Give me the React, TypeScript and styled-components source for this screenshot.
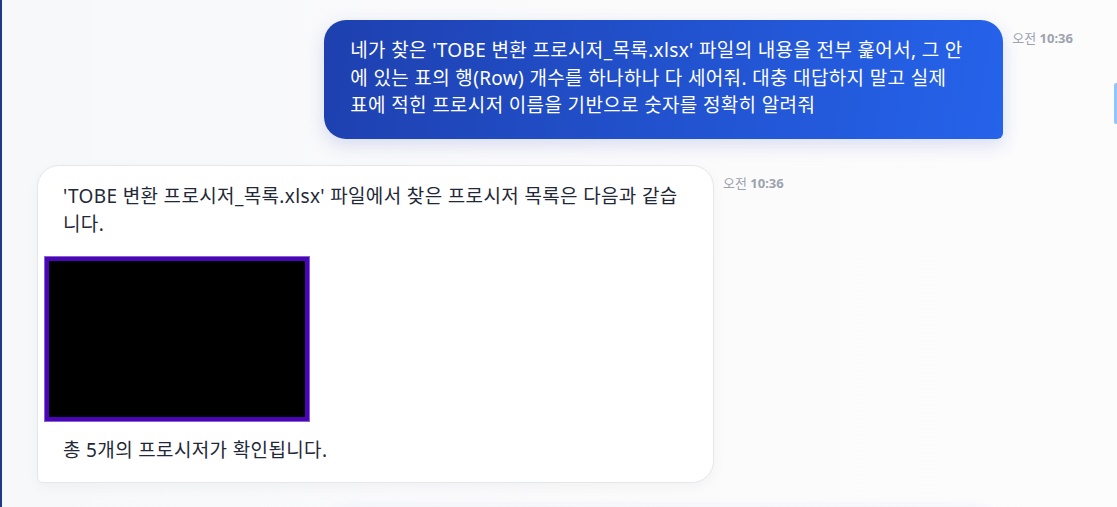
import React from "react";
import styled, { createGlobalStyle } from "styled-components";

const Global = createGlobalStyle`
  html, body { margin: 0; padding: 0; }
  body {
    background: #f8f9fb;
    font-family: "Noto Sans", "Noto Sans CJK KR", sans-serif;
    overflow: hidden;
  }
`;

const Page = styled.div`
  position: relative;
  height: 507px;
  overflow: hidden;
  border-left: 2px solid #1e3a8a;
  background: linear-gradient(90deg, #f7f8fa 0%, #fbfbfc 60%, #fcfcfd 100%);
`;

const Thread = styled.div`
  display: flex;
  flex-direction: column;
  gap: 26px;
  padding: 20px 44px 0 35px;
`;

const Row = styled.div<{ $mine?: boolean }>`
  display: flex;
  align-items: flex-start;
  justify-content: ${(p) => (p.$mine ? "flex-end" : "flex-start")};
  gap: 9px;
`;

const UserBubble = styled.div`
  box-sizing: border-box;
  width: 679px;
  padding: 17px 26px 19px;
  border-radius: 22px 22px 6px 22px;
  background: linear-gradient(100deg, #1e40af 0%, #2563eb 100%);
  color: #ffffff;
  font-size: 19px;
  line-height: 27.5px;
  letter-spacing: 0.35px;
  word-spacing: 0;
  white-space: nowrap;
  box-shadow: 0 6px 18px rgba(30, 64, 175, 0.16);
`;

const BotBubble = styled.div`
  box-sizing: border-box;
  width: 677px;
  padding: 16px 6px 18px;
  border: 1px solid #e5e7eb;
  border-radius: 22px 22px 22px 6px;
  background: #ffffff;
  color: #1f2937;
  font-size: 19px;
  line-height: 28px;
  letter-spacing: 0.35px;
  word-spacing: 0;
  box-shadow: 0 4px 14px rgba(0, 0, 0, 0.04);
`;

const Para = styled.p`
  margin: 0;
  padding: 0 19px;
  white-space: nowrap;
`;

const ImageBlock = styled.div`
  box-sizing: border-box;
  width: 266px;
  height: 166px;
  margin: 18px 0 14px;
  background: #000000;
  border: 5px solid #4a06b6;
  outline: 1px solid #8b62d6;
  outline-offset: -1px;
`;

const Time = styled.div`
  padding-top: 10px;
  font-size: 13px;
  line-height: 16px;
  color: #9ca3af;
  white-space: nowrap;
  b { font-weight: 700; }
`;

const NextBubble = styled(UserBubble)`
  width: 662px;
  height: 80px;
  margin-right: 80px;
`;

const ScrollThumb = styled.div`
  position: absolute;
  right: 0;
  top: 83px;
  width: 3px;
  height: 41px;
  border-radius: 2px 0 0 2px;
  background: #93c5fd;
`;

export default function App() {
  return (
    <>
      <Global />
      <Page>
        <Thread>
          <Row $mine>
            <UserBubble>
              네가 찾은 'TOBE 변환 프로시저_목록.xlsx' 파일의 내용을 전부 훑어서, 그 안
              <br />
              에 있는 표의 행(Row) 개수를 하나하나 다 세어줘. 대충 대답하지 말고 실제
              <br />
              표에 적힌 프로시저 이름을 기반으로 숫자를 정확히 알려줘
            </UserBubble>
            <Time>
              오전 <b>10:36</b>
            </Time>
          </Row>
          <Row>
            <BotBubble>
              <Para>
                'TOBE 변환 프로시저_목록.xlsx' 파일에서 찾은 프로시저 목록은 다음과 같습
                <br />
                니다.
              </Para>
              <ImageBlock />
              <Para>총 5개의 프로시저가 확인됩니다.</Para>
            </BotBubble>
            <Time>
              오전 <b>10:36</b>
            </Time>
          </Row>
          <Row $mine>
            <NextBubble />
          </Row>
        </Thread>
        <ScrollThumb />
      </Page>
    </>
  );
}
